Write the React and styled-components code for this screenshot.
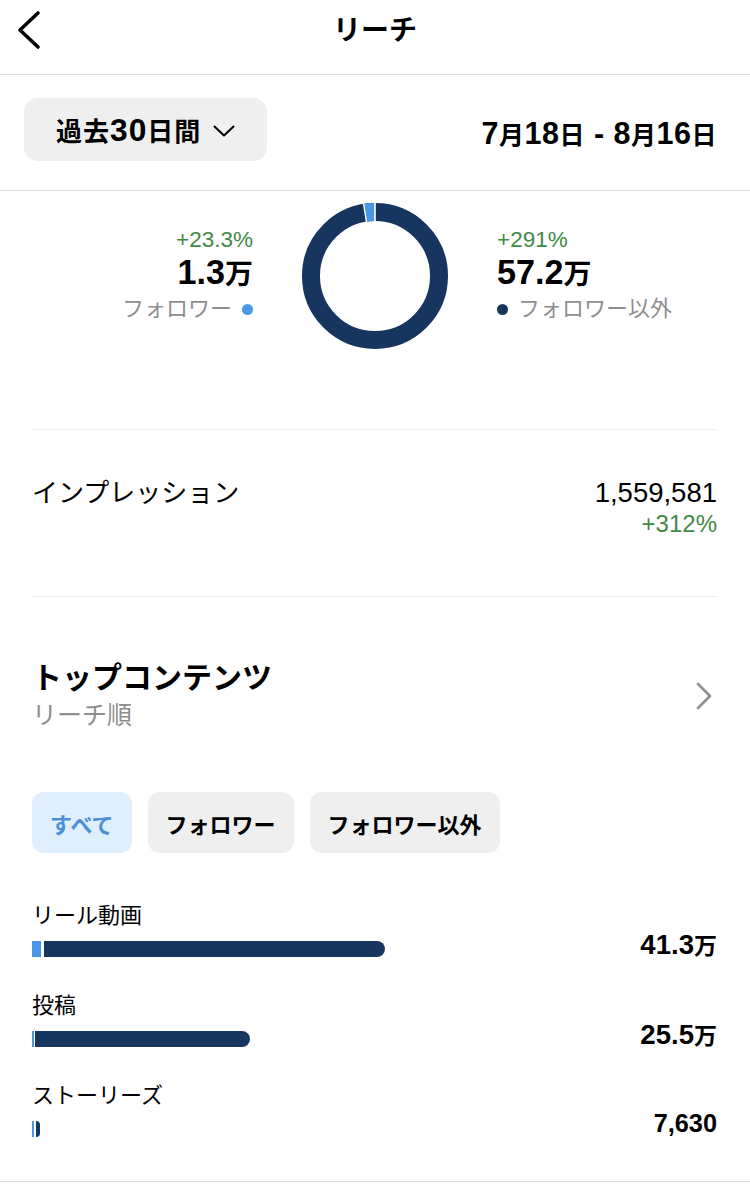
import React from "react";
import styled, { createGlobalStyle } from "styled-components";

const NAVY = "#17365f";
const LIGHT = "#4a97e8";
const GREEN = "#3f8a45";
const GRAY = "#8e8e8e";

const rows = [
  { name: "リール動画", num: "41.3", unit: "万", total: 413000, follower: 9, gap: 3 },
  { name: "投稿", num: "25.5", unit: "万", total: 255000, follower: 2, gap: 1 },
  { name: "ストーリーズ", num: "7,630", unit: "", total: 7630, follower: 2, gap: 2 },
];

const MAX = 413000;
const TRACK = 353;

const App = () => {
  return (
    <Page>
      <GlobalStyle />

      <Header>
        <Back>
          <svg width="26" height="40" viewBox="0 0 26 40">
            <polyline
              points="21,3 3,20 21,37"
              fill="none"
              stroke="#000"
              strokeWidth="3.6"
              strokeLinecap="round"
              strokeLinejoin="round"
            />
          </svg>
        </Back>
        <Title>リーチ</Title>
        <span />
      </Header>

      <FilterRow>
        <Period>
          <span>
            過去<Num>30</Num>日間
          </span>
          <svg width="22" height="12" viewBox="0 0 22 12">
            <polyline
              points="1.5,1.5 11,10.5 20.5,1.5"
              fill="none"
              stroke="#000"
              strokeWidth="2"
              strokeLinecap="round"
              strokeLinejoin="round"
            />
          </svg>
        </Period>
        <DateRange>
          <Num>7</Num>月<Num>18</Num>日<Num> - 8</Num>月<Num>16</Num>日
        </DateRange>
      </FilterRow>

      <DonutSection>
        <Side align="right">
          <Change>+23.3%</Change>
          <Big>
            <Num>1.3</Num>万
          </Big>
          <Legend>
            フォロワー <Dot color={LIGHT} />
          </Legend>
        </Side>
        <svg width="146" height="146" viewBox="0 0 146 146">
          <circle cx="73" cy="73" r="64" fill="none" stroke={NAVY} strokeWidth="18" />
          <path d="M63 9.79 A64 64 0 0 1 73 9" fill="none" stroke={LIGHT} strokeWidth="18" />
          <line x1="73" y1="0" x2="73" y2="19" stroke="#fff" strokeWidth="1.6" />
          <line x1="61.6" y1="0.9" x2="64.6" y2="19.7" stroke="#fff" strokeWidth="1.4" />
        </svg>
        <Side align="left">
          <Change>+291%</Change>
          <Big>
            <Num>57.2</Num>万
          </Big>
          <Legend>
            <Dot color={NAVY} /> フォロワー以外
          </Legend>
        </Side>
      </DonutSection>

      <Inner>
        <Impressions>
          <MetricLabel>インプレッション</MetricLabel>
          <MetricValues>
            <MetricNumber>1,559,581</MetricNumber>
            <MetricChange>+312%</MetricChange>
          </MetricValues>
        </Impressions>

        <TopHeader>
          <div>
            <TopTitle>トップコンテンツ</TopTitle>
            <TopSub>リーチ順</TopSub>
          </div>
          <svg width="18" height="28" viewBox="0 0 18 28">
            <polyline
              points="3,2 15,14 3,26"
              fill="none"
              stroke={GRAY}
              strokeWidth="2.6"
              strokeLinecap="round"
              strokeLinejoin="round"
            />
          </svg>
        </TopHeader>

        <Tabs>
          <Tab active>すべて</Tab>
          <Tab>フォロワー</Tab>
          <Tab>フォロワー以外</Tab>
        </Tabs>

        <List>
          {rows.map((row) => (
            <Item key={row.name}>
              <ItemName>{row.name}</ItemName>
              <Bar style={{ width: Math.max((row.total / MAX) * TRACK, 8) + "px" }}>
                <BarFollower style={{ width: row.follower + "px", marginRight: row.gap + "px" }} />
                <BarRest />
              </Bar>
              <ItemValue>
                <Num scale={row.unit ? 1.2 : 1.1}>{row.num}</Num>
                {row.unit}
              </ItemValue>
            </Item>
          ))}
        </List>
      </Inner>
    </Page>
  );
};

const GlobalStyle = createGlobalStyle`
  body {
    margin: 0;
    background: #fff;
    font-family: "Liberation Sans", "Noto Sans CJK JP", sans-serif;
    color: #000;
  }
`;

const Page = styled.div`
  width: 750px;
  min-height: 1192px;
  background: #fff;
`;

// Latin digits sit larger than the kana around them
const Num = styled.span`
  font-size: ${(p) => p.scale || 1.22}em;
  line-height: 1;
`;

// Header

const Header = styled.div`
  display: grid;
  grid-template-columns: 80px 1fr 80px;
  align-items: start;
  height: 74px;
  border-bottom: 1px solid #dcdcdc;
`;
const Back = styled.div`
  padding: 10px 0 0 17px;
`;
const Title = styled.div`
  text-align: center;
  font-size: 28px;
  font-weight: 700;
  line-height: 36px;
  padding-top: 13px;
`;

// Filter

const FilterRow = styled.div`
  display: flex;
  align-items: center;
  justify-content: space-between;
  padding: 23px 33px 29px 24px;
  border-bottom: 1px solid #dcdcdc;
`;
const Period = styled.div`
  display: flex;
  align-items: center;
  gap: 12px;
  height: 63px;
  padding: 0 0 0 32px;
  box-sizing: border-box;
  width: 243px;
  background: #efefef;
  border-radius: 14px;
  font-size: 26px;
  font-weight: 700;
  letter-spacing: 1px;
  svg {
    margin-top: 3px;
  }
`;
const DateRange = styled.div`
  font-size: 25px;
  font-weight: 700;
  letter-spacing: 0.5px;
  margin-top: 6px;
`;

// Donut

const DonutSection = styled.div`
  display: grid;
  grid-template-columns: 1fr 146px 1fr;
  column-gap: 49px;
  align-items: center;
  padding: 12px 32px 80px;
`;
const Side = styled.div`
  display: flex;
  flex-direction: column;
  align-items: ${(p) => (p.align === "right" ? "flex-end" : "flex-start")};
  text-align: ${(p) => p.align};
  margin-top: -2px;
`;
const Change = styled.div`
  color: ${GREEN};
  font-size: 22.5px;
  line-height: 30px;
`;
const Big = styled.div`
  font-size: 28px;
  font-weight: 700;
  line-height: 36px;
`;
const Legend = styled.div`
  display: flex;
  align-items: center;
  gap: 10px;
  color: ${GRAY};
  font-size: 22px;
  line-height: 32px;
`;
const Dot = styled.span`
  display: inline-block;
  width: 11px;
  height: 11px;
  border-radius: 50%;
  background: ${(p) => p.color};
`;

// Content

const Inner = styled.div`
  padding: 0 33px 44px 32px;
  border-bottom: 1px solid #dcdcdc;
`;

const Impressions = styled.div`
  display: flex;
  justify-content: space-between;
  align-items: flex-start;
  border-top: 1px solid #efefef;
  border-bottom: 1px solid #efefef;
  padding: 47px 0 57px;
`;
const MetricLabel = styled.div`
  font-size: 26px;
  line-height: 32px;
`;
const MetricValues = styled.div`
  text-align: right;
`;
const MetricNumber = styled.div`
  font-size: 27.5px;
  line-height: 32px;
`;
const MetricChange = styled.div`
  color: ${GREEN};
  font-size: 24px;
  line-height: 30px;
`;

const TopHeader = styled.div`
  display: flex;
  justify-content: space-between;
  align-items: center;
  padding-top: 62px;
  svg {
    margin-right: 4px;
  }
`;
const TopTitle = styled.div`
  font-size: 30px;
  font-weight: 700;
  line-height: 38px;
`;
const TopSub = styled.div`
  color: ${GRAY};
  font-size: 25px;
  line-height: 36px;
`;

const Tabs = styled.div`
  display: flex;
  gap: 16px;
  margin-top: 59px;
`;
const Tab = styled.div`
  height: 61px;
  display: flex;
  align-items: center;
  padding: 0 18px;
  border-radius: 12px;
  font-size: 22px;
  font-weight: 700;
  background: ${(p) => (p.active ? "#e0effd" : "#efefef")};
  color: ${(p) => (p.active ? "#4a90d9" : "#000")};
`;

const List = styled.div`
  display: flex;
  flex-direction: column;
  gap: 34px;
  margin-top: 48px;
`;
const Item = styled.div`
  display: grid;
  grid-template-columns: 1fr auto;
  grid-template-rows: 30px 16px;
  row-gap: 10px;
  align-items: center;
`;
const ItemName = styled.div`
  grid-column: 1 / -1;
  font-size: 22px;
  line-height: 30px;
`;
const Bar = styled.div`
  display: flex;
  height: 16px;
`;
const BarFollower = styled.div`
  background: ${LIGHT};
  flex-shrink: 0;
`;
const BarRest = styled.div`
  flex: 1;
  background: ${NAVY};
  border-radius: 0 8px 8px 0;
`;
const ItemValue = styled.div`
  display: flex;
  align-items: baseline;
  height: 16px;
  font-size: 23px;
  font-weight: 700;
  line-height: 16px;
  margin-top: -20px;
`;

export default App;
